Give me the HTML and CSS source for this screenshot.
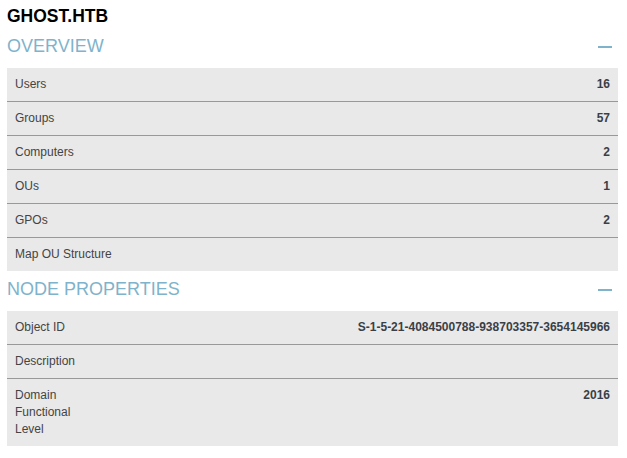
FILE: index.html
```html
<!DOCTYPE html>
<html>
<head>
<meta charset="utf-8">
<link rel="stylesheet" href="styles.css">
</head>
<body>
<h1 class="title">GHOST.HTB</h1>
<div class="section-head">
  <span class="section-title">OVERVIEW</span>
  <span class="collapse"></span>
</div>
<div class="props">
  <div class="row"><span class="label">Users</span><span class="value">16</span></div>
  <div class="row"><span class="label">Groups</span><span class="value">57</span></div>
  <div class="row"><span class="label">Computers</span><span class="value">2</span></div>
  <div class="row"><span class="label">OUs</span><span class="value">1</span></div>
  <div class="row"><span class="label">GPOs</span><span class="value">2</span></div>
  <div class="row"><span class="label">Map OU Structure</span><span class="value"></span></div>
</div>
<div class="section-head second">
  <span class="section-title">NODE PROPERTIES</span>
  <span class="collapse"></span>
</div>
<div class="props">
  <div class="row"><span class="label">Object ID</span><span class="value">S-1-5-21-4084500788-938703357-3654145966</span></div>
  <div class="row"><span class="label">Description</span><span class="value"></span></div>
  <div class="row"><span class="label narrow">Domain Functional Level</span><span class="value">2016</span></div>
</div>
</body>
</html>
```
FILE: styles.css
```css
html, body {
  margin: 0;
  background: #ffffff;
}
body {
  padding: 6px 9px 0 7px;
  font-family: "Liberation Sans", Arial, sans-serif;
  color: #333;
}
.title {
  margin: 0;
  font-size: 17.5px;
  line-height: 20px;
  font-weight: bold;
  color: #000;
}
.section-head {
  margin-top: 10px;
  display: flex;
  align-items: center;
  justify-content: space-between;
  height: 21px;
}
.section-head.second {
  margin-top: 8px;
}
.section-title {
  font-size: 18px;
  line-height: 21px;
  color: #7fb3cb;
}
.collapse {
  width: 14px;
  height: 2px;
  background: #7fb3cb;
  margin-right: 6px;
  margin-top: 1px;
}
.props {
  margin-top: 11px;
  background: #e9e9e9;
}
.row {
  display: flex;
  justify-content: space-between;
  align-items: flex-start;
  padding: 8px 8px;
  font-size: 12px;
  line-height: 17px;
  border-bottom: 1px solid #999;
}
.row:last-child {
  border-bottom: none;
}
.label {
  color: #444;
}
.label.narrow {
  max-width: 62px;
}
.value {
  font-weight: bold;
  color: #3a3f47;
  text-align: right;
  white-space: nowrap;
}
```
